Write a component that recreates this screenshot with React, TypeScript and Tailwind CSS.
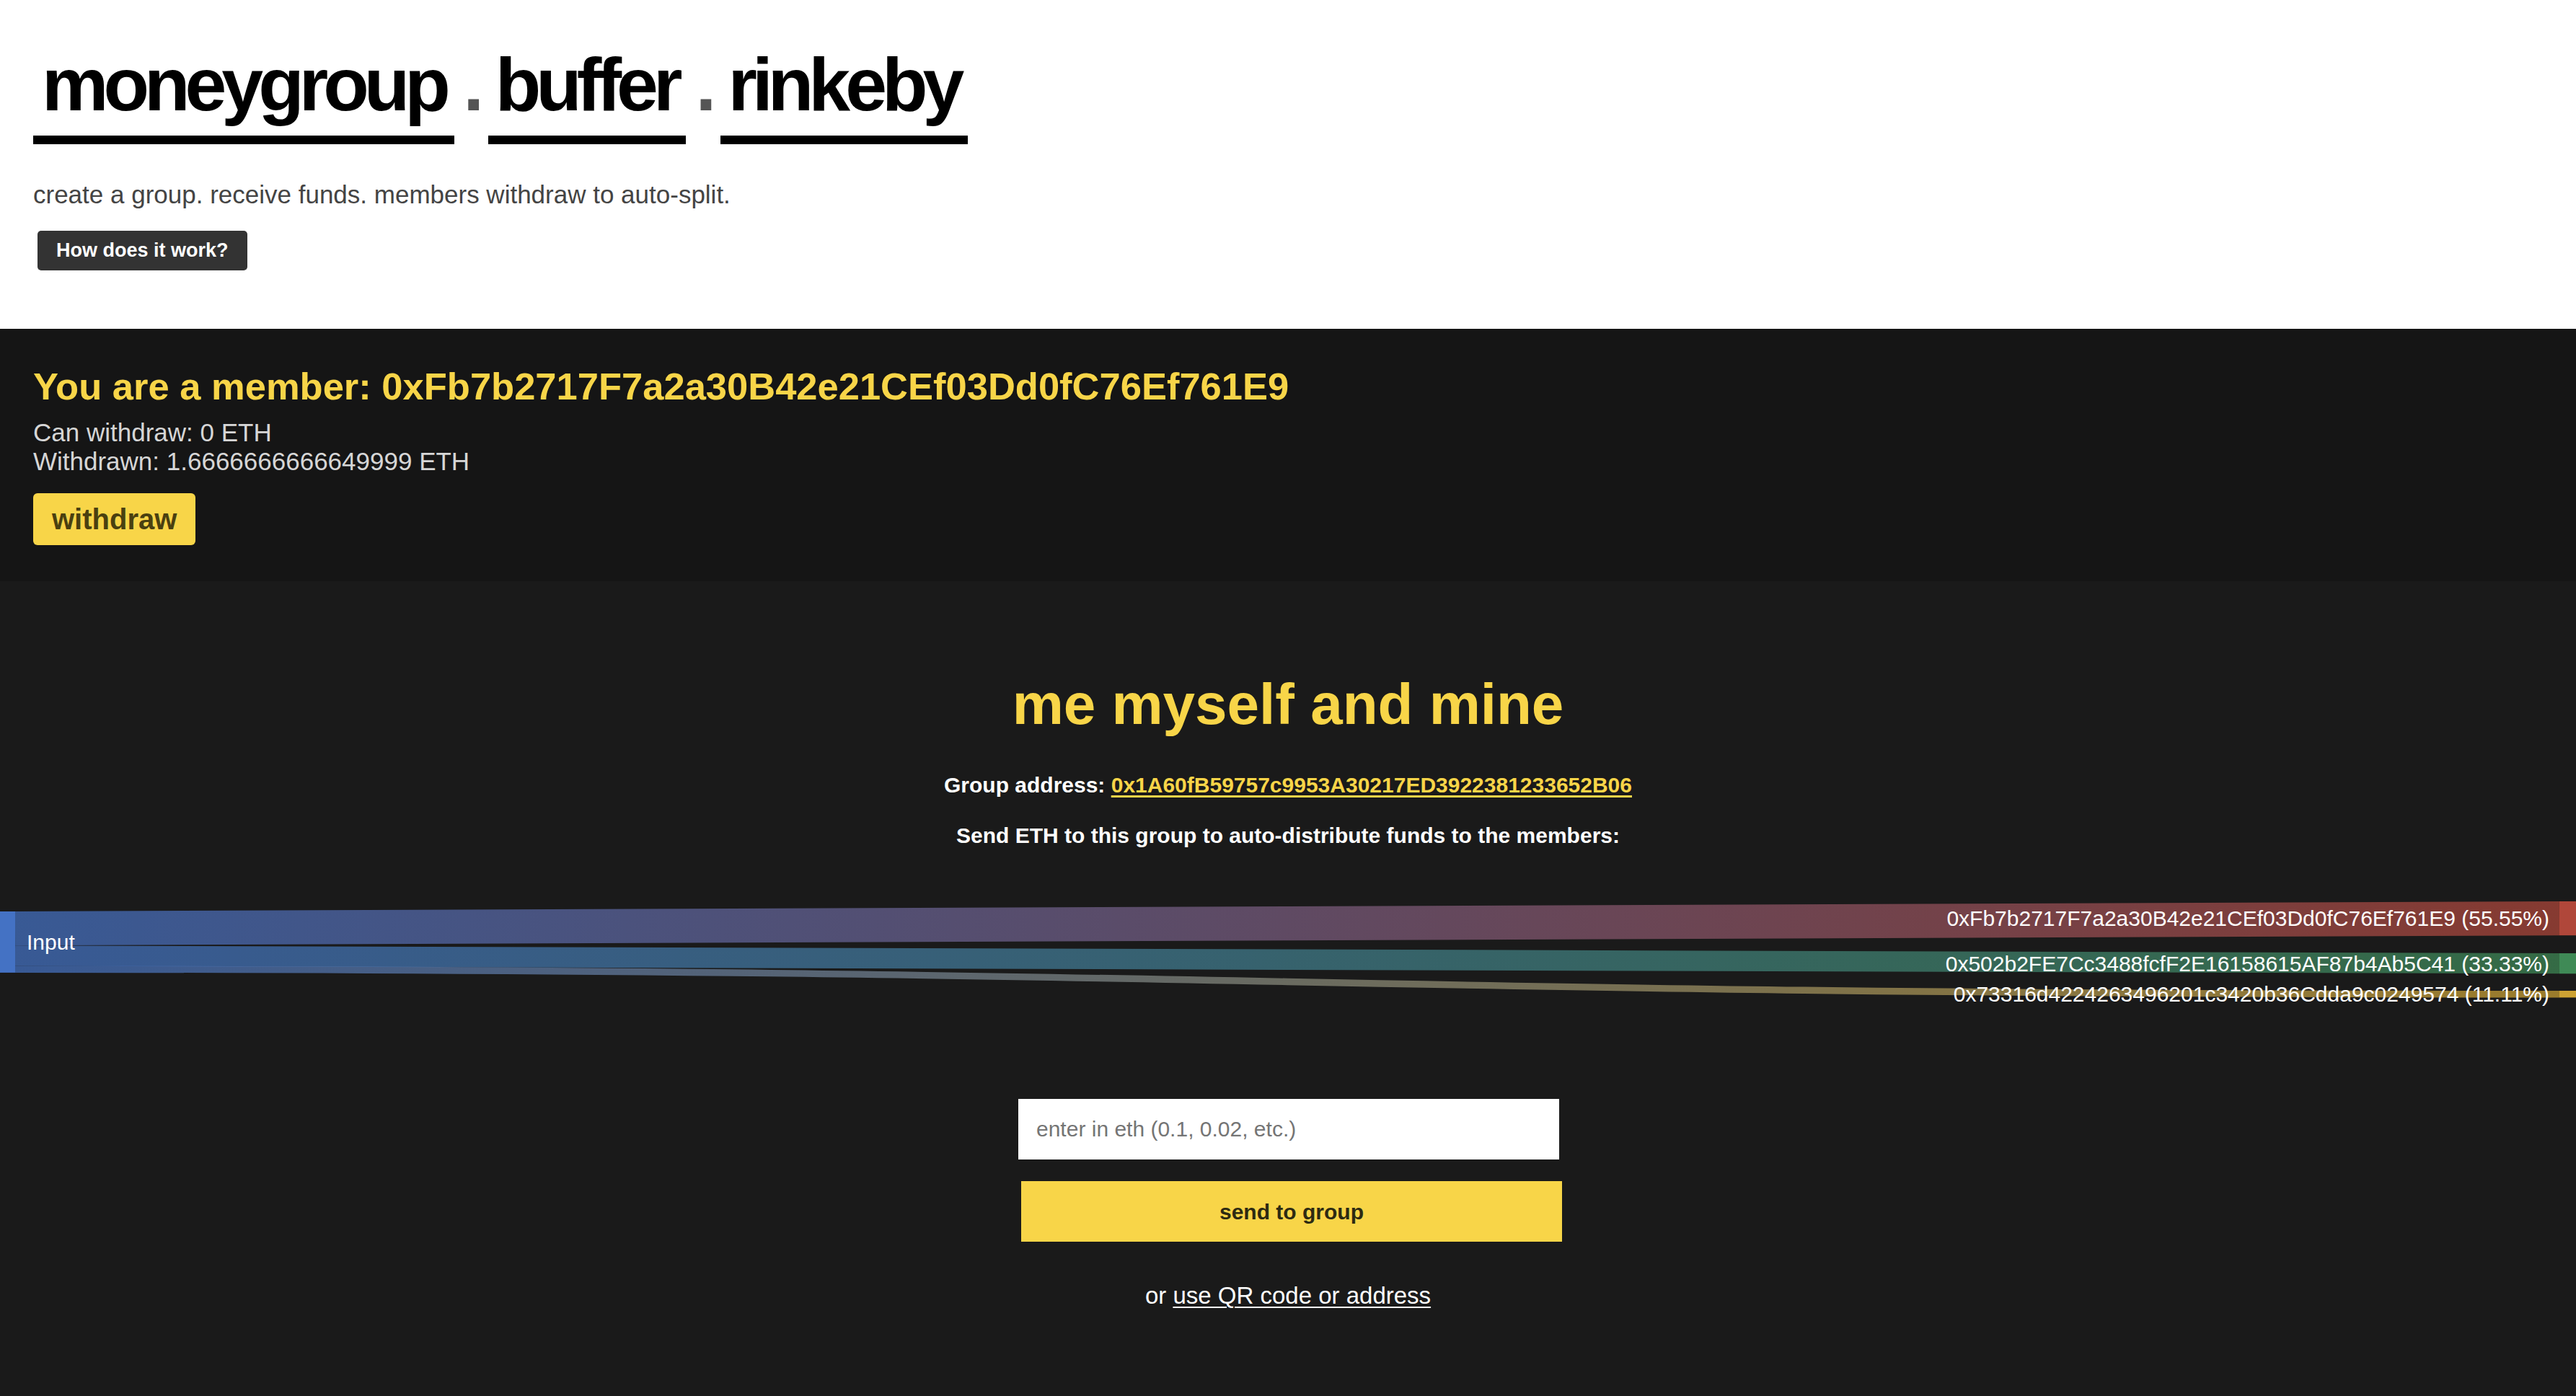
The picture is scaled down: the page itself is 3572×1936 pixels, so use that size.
import React from "react";

const YELLOW = "#f8d548";

const targets = [
  {
    label: "0xFb7b2717F7a2a30B42e21CEf03Dd0fC76Ef761E9 (55.55%)",
    color: "#b0473a",
    y0: 30,
    y1: 77.2,
    s0: 44,
    s1: 91.2,
  },
  {
    label: "0x502b2FE7Cc3488fcfF2E16158615AF87b4Ab5C41 (33.33%)",
    color: "#3f8a56",
    y0: 102,
    y1: 130.3,
    s0: 91.2,
    s1: 119.5,
  },
  {
    label: "0x73316d4224263496201c3420b36Cdda9c0249574 (11.11%)",
    color: "#cda233",
    y0: 154,
    y1: 163.4,
    s0: 119.5,
    s1: 128.9,
  },
];

const SRC = "#4472c4";
const X0 = 21;
const X1 = 3549;

function linkPath(y0: number, y1: number) {
  const xm = (X0 + X1) / 2;
  return `M${X0},${y0} C${xm},${y0} ${xm},${y1} ${X1},${y1}`;
}

function Sankey() {
  return (
    <svg className="mt-[43px] block w-full h-[200px]" viewBox="0 0 3572 200">
      <defs>
        {targets.map((t, i) => (
          <linearGradient key={i} id={`grad-${i}`} gradientUnits="userSpaceOnUse" x1={X0} x2={X1} y1={0} y2={0}>
            <stop offset="0%" stopColor={SRC} />
            <stop offset="100%" stopColor={t.color} />
          </linearGradient>
        ))}
      </defs>
      {targets.map((t, i) => (
        <path
          key={i}
          d={linkPath((t.s0 + t.s1) / 2, (t.y0 + t.y1) / 2)}
          fill="none"
          stroke={`url(#grad-${i})`}
          strokeOpacity={0.72}
          strokeWidth={t.s1 - t.s0}
        />
      ))}
      <rect x={0} y={44} width={X0} height={84.9} fill={SRC} />
      {targets.map((t, i) => (
        <rect key={i} x={X1} y={t.y0} width={24} height={t.y1 - t.y0} fill={t.color} />
      ))}
      <text x={37} y={86.5} dy="0.35em" fill="#fff" fontSize={30} fontFamily="'Liberation Sans', Arial, sans-serif">
        Input
      </text>
      {targets.map((t, i) => (
        <text
          key={i}
          x={3535}
          y={(t.y0 + t.y1) / 2}
          dy="0.35em"
          textAnchor="end"
          fill="#fff"
          fontSize={30}
          fontFamily="'Liberation Sans', Arial, sans-serif"
        >
          {t.label}
        </text>
      ))}
    </svg>
  );
}

export default function App() {
  return (
    <div className="min-h-screen flex flex-col font-['Liberation_Sans',Arial,sans-serif]">
      <header className="bg-white px-[46px] pt-[65px] pb-[81px]">
        <h1 className="flex items-start text-[104px] leading-none font-bold tracking-[-7px] text-black">
          <span className="border-b-[12px] border-black pb-[19px] pl-[12px] pr-[12px]">moneygroup</span>
          <span className="w-[47px] flex justify-center text-[#555]">.</span>
          <span className="border-b-[12px] border-black pb-[19px] pl-[10px] pr-[12px]">buffer</span>
          <span className="w-[48px] flex justify-center text-[#555]">.</span>
          <span className="border-b-[12px] border-black pb-[19px] pl-[10px] pr-[12px]">rinkeby</span>
        </h1>
        <p className="mt-[50px] text-[35px] leading-[40px] text-[#444]">
          create a group. receive funds. members withdraw to auto-split.
        </p>
        <button className="mt-[30px] ml-[6px] h-[55px] px-[26px] rounded-[5px] bg-[#333] text-white text-[27px] font-bold">
          How does it work?
        </button>
      </header>

      <section className="bg-[#151515] px-[46px] pt-[48px] pb-[50px]">
        <h2 className="text-[52.5px] leading-[64px] font-bold text-[#f8d548]">
          You are a member: 0xFb7b2717F7a2a30B42e21CEf03Dd0fC76Ef761E9
        </h2>
        <div className="mt-[12px] text-[35px] leading-[40px] text-[#d6d6d6]">
          <p>Can withdraw: 0 ETH</p>
          <p>Withdrawn: 1.6666666666649999 ETH</p>
        </div>
        <button className="mt-[24px] h-[72px] px-[26px] rounded-[6px] bg-[#f8d548] text-[40px] font-bold text-[#4a4010]">
          withdraw
        </button>
      </section>

      <section className="flex-1 bg-[#1a1a1a] pt-[131px] pb-[40px] text-center">
        <h2 className="text-[80px] leading-none font-bold" style={{ color: YELLOW }}>
          me myself and mine
        </h2>
        <p className="mt-[54px] text-[30px] leading-[36px] font-bold text-white">
          Group address:{" "}
          <a href="#" className="text-[#f8d548] underline decoration-[3px] underline-offset-[4px]">
            0x1A60fB59757c9953A30217ED3922381233652B06
          </a>
        </p>
        <p className="mt-[34px] text-[30px] leading-[36px] font-bold text-white">
          Send ETH to this group to auto-distribute funds to the members:
        </p>

        <Sankey />

        <div className="mx-auto mt-[104px] w-[760px] flex flex-col items-end">
          <input
            type="text"
            placeholder="enter in eth (0.1, 0.02, etc.)"
            className="self-start ml-[6px] w-[750px] h-[84px] bg-white pl-[25px] text-[30px] text-black outline-none placeholder:text-[#757575]"
          />
          <button className="mt-[30px] w-[750px] h-[84px] bg-[#f8d548] text-[30px] font-bold text-[#2d2a12]">
            send to group
          </button>
        </div>

        <p className="mt-[55px] text-[33px] leading-[40px] text-white">
          or{" "}
          <a href="#" className="underline decoration-2 underline-offset-[4px]">
            use QR code or address
          </a>
        </p>
      </section>
    </div>
  );
}
